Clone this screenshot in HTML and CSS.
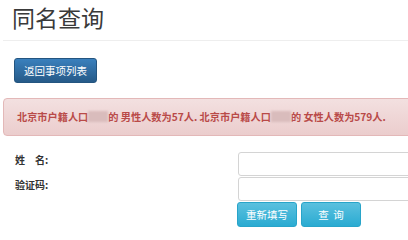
FILE: index.html
```html
<!DOCTYPE html>
<html lang="zh-CN">
<head>
    <meta charset="UTF-8">
    <title>同名查询</title>
    <link rel="stylesheet" href="styles.css">
</head>
<body>
    <div class="page">
        <div class="page-header">
            <h1>同名查询</h1>
        </div>
        <div class="toolbar">
            <button class="btn btn-primary">返回事项列表</button>
        </div>
        <div class="alert">
            北京市户籍人口<span class="masked"></span>的 男性人数为57人. 北京市户籍人口<span class="masked"></span>的 女性人数为579人.
        </div>
        <div class="search-form">
            <label class="field-label">姓　名:</label>
            <input type="text" class="field-input">
            <label class="field-label">验证码:</label>
            <input type="text" class="field-input">
            <div></div>
            <div class="form-actions">
                <button class="btn btn-info">重新填写</button>
                <button class="btn btn-info">查&nbsp;&nbsp;询</button>
            </div>
        </div>
    </div>
</body>
</html>
```

FILE: styles.css
```css
body {
    margin: 0;
    font-family: "Noto Sans CJK SC", "Liberation Sans", sans-serif;
    color: #333;
    background: #fff;
    overflow: hidden;
}
.page {
    padding-left: 3px;
}
.page-header {
    height: 40px;
    border-bottom: 1px solid #eee;
}
.page-header h1 {
    margin: 0;
    padding: 1px 0 0 9px;
    font-size: 23px;
    font-weight: normal;
    line-height: 32px;
    color: #3a3a3a;
}
.toolbar {
    padding: 15px 0 15px 11px;
}
.btn {
    font-family: inherit;
    font-size: 10.5px;
    color: #fff;
    border-radius: 3px;
    cursor: pointer;
    padding: 0;
    height: 25px;
    line-height: 23px;
}
.btn-primary {
    width: 83px;
    background: linear-gradient(#3a80bd, #265a88);
    border: 1px solid #245580;
}
.btn-info {
    width: 60px;
    background: linear-gradient(#5bc0de, #2aabd2);
    border: 1px solid #28a4c9;
}
.alert {
    height: 36px;
    margin-right: -20px;
    padding-left: 13px;
    background: linear-gradient(#f3e0e0, #ebcdcd);
    border: 1px solid #e3b8b8;
    border-radius: 4px;
    color: #b94a48;
    font-size: 10.2px;
    font-weight: bold;
    line-height: 36px;
    white-space: nowrap;
}
.masked {
    display: inline-block;
    width: 20px;
    height: 11px;
    vertical-align: -1px;
    background: #d9bcbc;
    filter: blur(1.2px);
}
.search-form {
    display: grid;
    grid-template-columns: 223px 200px;
    row-gap: 1px;
    margin-top: 16px;
    padding-left: 12px;
    align-items: start;
}
.field-label {
    font-size: 10px;
    font-weight: bold;
    line-height: 14px;
    padding-top: 1px;
}
.field-input {
    box-sizing: border-box;
    width: 200px;
    height: 24px;
    border: 1px solid #d4d4d4;
    border-radius: 3px;
    margin: 0;
}
.form-actions {
    display: flex;
    gap: 4px;
    margin-left: -1px;
}
```
